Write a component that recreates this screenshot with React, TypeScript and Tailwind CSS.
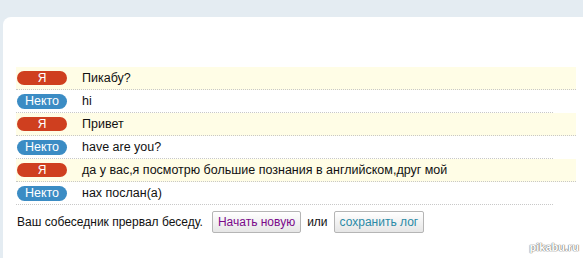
const messages = [
  { who: 'me', text: 'Пикабу?' },
  { who: 'nekto', text: 'hi' },
  { who: 'me', text: 'Привет' },
  { who: 'nekto', text: 'have are you?' },
  { who: 'me', text: 'да у вас,я посмотрю большие познания в английском,друг мой' },
  { who: 'nekto', text: 'нах послан(а)' },
];

function Badge({ who }: { who: string }) {
  if (who === 'me') {
    return (
      <span className="flex h-[14px] w-[50px] shrink-0 items-center justify-center rounded-full bg-[#cf3f1f] text-[12px] leading-none text-white">
        Я
      </span>
    );
  }
  return (
    <span className="flex h-[15px] w-[50px] shrink-0 items-center justify-center rounded-full bg-[#3b8cc4] text-[12.5px] leading-none text-white">
      Некто
    </span>
  );
}

export default function App() {
  return (
    <div
      className="relative h-[258px] w-[583px] overflow-hidden bg-[#e4ecf2] pt-[17px] pl-[3px] text-[#111]"
      style={{ fontFamily: '"Liberation Sans", Arial, sans-serif' }}
    >
      <div className="h-full rounded-tl-[8px] bg-white pt-[50px] pl-[13px]">
        <div className="flex flex-col">
          {messages.map((m, i) => (
            <div
              key={i}
              className={
                m.who === 'me'
                  ? 'flex h-[23px] w-[560px] items-center gap-[15px] border-b border-dotted border-[#c8c8c8] bg-[#fffde6] pl-[1px]'
                  : 'flex h-[23px] w-[537px] items-center gap-[15px] border-b border-dotted border-[#c8c8c8] pl-[1px]'
              }
            >
              <Badge who={m.who} />
              <span className="text-[12.5px] leading-none">{m.text}</span>
            </div>
          ))}
        </div>
        <div className="mt-[6px] flex items-center gap-[6px] pl-[1px] text-[12px]">
          <span>Ваш собеседник прервал беседу.</span>
          <button className="ml-[3px] h-[22px] rounded-[2px] border border-[#b5b5b5] bg-gradient-to-b from-[#ffffff] to-[#e6e6e6] px-[5px] text-[12px] text-[#7a0a8a]">
            Начать новую
          </button>
          <span>или</span>
          <button className="h-[22px] rounded-[2px] border border-[#b5b5b5] bg-gradient-to-b from-[#ffffff] to-[#e6e6e6] px-[5px] text-[12px] text-[#2a8aa6]">
            сохранить лог
          </button>
        </div>
      </div>
      <span
        className="absolute right-[4px] bottom-[3px] text-[11px] font-bold text-white"
        style={{ textShadow: '0 0 1px #777, 0 0 1px #777, 0 0 1px #777' }}
      >
        pikabu.ru
      </span>
    </div>
  );
}
